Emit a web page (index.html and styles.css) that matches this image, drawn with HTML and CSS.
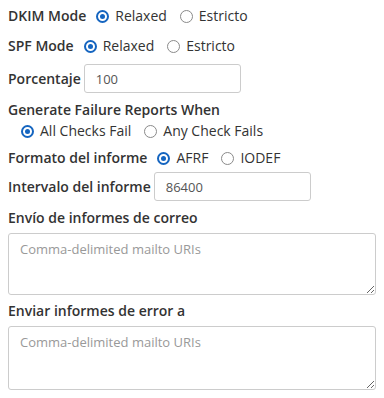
FILE: index.html
```html
<!DOCTYPE html>
<html lang="es">
<head>
    <meta charset="UTF-8">
    <meta name="viewport" content="width=device-width, initial-scale=1.0">
    <title>DMARC</title>
    <link rel="stylesheet" href="styles.css">
</head>
<body>
    <form class="dmarc-form">
        <div class="row row-dkim">
            <span class="label">DKIM Mode</span>
            <label class="option"><input type="radio" name="adkim" checked> Relaxed</label>
            <label class="option"><input type="radio" name="adkim"> Estricto</label>
        </div>

        <div class="row row-spf">
            <span class="label">SPF Mode</span>
            <label class="option"><input type="radio" name="aspf" checked> Relaxed</label>
            <label class="option"><input type="radio" name="aspf"> Estricto</label>
        </div>

        <div class="row row-input">
            <label class="label" for="pct">Porcentaje</label>
            <input type="text" id="pct" class="text-input" value="100">
        </div>

        <div class="group">
            <div class="label">Generate Failure Reports When</div>
            <div class="row row-indent">
                <label class="option"><input type="radio" name="fo" checked> All Checks Fail</label>
                <label class="option"><input type="radio" name="fo"> Any Check Fails</label>
            </div>
        </div>

        <div class="row row-format">
            <span class="label">Formato del informe</span>
            <label class="option"><input type="radio" name="rf" checked> AFRF</label>
            <label class="option"><input type="radio" name="rf"> IODEF</label>
        </div>

        <div class="row row-input">
            <label class="label" for="ri">Intervalo del informe</label>
            <input type="text" id="ri" class="text-input" value="86400">
        </div>

        <div class="group">
            <label class="label block" for="rua">Envío de informes de correo</label>
            <textarea id="rua" placeholder="Comma-delimited mailto URIs"></textarea>
        </div>

        <div class="group">
            <label class="label block" for="ruf">Enviar informes de error a</label>
            <textarea id="ruf" class="tall" placeholder="Comma-delimited mailto URIs"></textarea>
        </div>
    </form>
</body>
</html>
```

FILE: styles.css
```css
:root {
    --text-color: #333333;
    --border-color: #cccccc;
    --accent-color: #1565c0;
    --radio-border: #8a8a8a;
}

* {
    box-sizing: border-box;
}

body {
    margin: 0;
    padding: 6px 8px;
    font-family: 'Open Sans', 'Liberation Sans', sans-serif;
    font-size: 14px;
    line-height: 20px;
    color: var(--text-color);
    background: #ffffff;
}

.row {
    display: flex;
    align-items: center;
    gap: 10px;
}

.label {
    font-weight: 600;
}

.label.block {
    display: block;
}

.option {
    display: flex;
    align-items: center;
    gap: 6px;
    margin-right: 3px;
}

.row-dkim {
    margin-bottom: 10px;
}

.row-spf {
    margin-bottom: 8px;
}

.row-input {
    gap: 3px;
    margin-bottom: 7px;
}

.row-indent {
    padding-left: 13px;
    margin-top: 1px;
    margin-bottom: 7px;
}

.row-format {
    margin-bottom: 4px;
}

.group .label.block {
    margin-bottom: 5px;
}

input[type="radio"] {
    appearance: none;
    -webkit-appearance: none;
    width: 13px;
    height: 13px;
    margin: 0;
    border: 1.5px solid var(--radio-border);
    border-radius: 50%;
    display: grid;
    place-items: center;
    flex-shrink: 0;
}

input[type="radio"]:checked {
    border: 2px solid var(--accent-color);
}

input[type="radio"]:checked::before {
    content: "";
    width: 5px;
    height: 5px;
    border-radius: 50%;
    background: var(--accent-color);
}

.text-input {
    width: 157px;
    height: 29px;
    padding: 0 11px;
    border: 1px solid var(--border-color);
    border-radius: 3px;
    font-family: inherit;
    font-size: 13px;
    color: #555555;
}

textarea {
    display: block;
    width: 368px;
    height: 62px;
    margin: 0 0 6px 0;
    padding: 6px 11px;
    border: 1px solid var(--border-color);
    border-radius: 3px;
    font-family: inherit;
    font-size: 13px;
    line-height: 18px;
    resize: vertical;
}

textarea.tall {
    height: 64px;
}

textarea::placeholder {
    color: #999999;
}
```
